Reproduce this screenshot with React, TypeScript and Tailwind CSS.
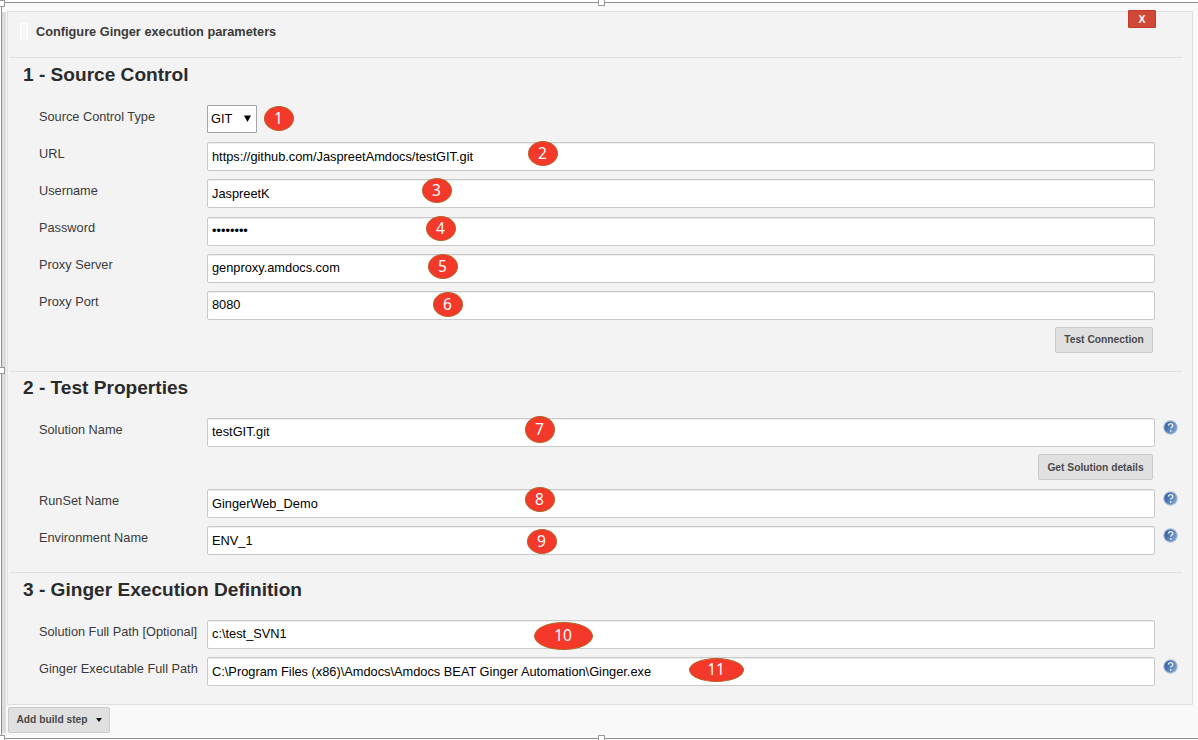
import type { ReactNode } from "react";

function HelpIcon() {
  return (
    <svg className="mt-[1.5px] ml-[8px] h-[15px] w-[15px] shrink-0" viewBox="0 0 14 14" aria-hidden="true">
      <defs>
        <linearGradient id="help" x1="0" y1="0" x2="1" y2="0.6">
          <stop offset="0.1" stopColor="#315c9c" />
          <stop offset="1" stopColor="#7ba0cc" />
        </linearGradient>
      </defs>
      <circle cx="7" cy="7" r="6.7" fill="#a3b7d4" />
      <circle cx="7" cy="7" r="5.7" fill="url(#help)" />
      <path d="M5 5.200c.1-1.200 1-1.800 2.100-1.800s2 .7 2 1.700c0 1.500-1.800 1.500-1.800 2.900" fill="none" stroke="#e9effa" strokeWidth="1.300" />
      <circle cx="7.200" cy="10.200" r="0.850" fill="#e9effa" />
    </svg>
  );
}

function Row({ label, help = false, children }: { label: string; help?: boolean; children: ReactNode }) {
  return (
    <div className="flex h-[37.2px] items-start">
      <div className="w-[168px] shrink-0 pt-[2.5px] text-[12.75px] leading-[18px] whitespace-nowrap text-[#3a3a3a]">
        {label}
      </div>
      {children}
      {help && <HelpIcon />}
    </div>
  );
}

function Field({ value }: { value: string }) {
  return (
    <div className="flex h-[29px] w-[948px] shrink-0 items-center rounded-[2px] border border-[#c9c9c9] bg-white pb-px pl-[4px] text-[12.8px] text-black shadow-[inset_0_1px_0_#eee]">
      {value}
    </div>
  );
}

function Section({ title, className, titleClass = "h-[47px] pt-[5px]", children }: { title: string; className: string; titleClass?: string; children: ReactNode }) {
  return (
    <section className={`ml-[2px] w-[1172px] shrink-0 border-t border-[#dedede] pl-[13px] ${className}`}>
      <h2 className={`text-[19.1px] leading-[24px] font-bold text-[#2b2b2b] ${titleClass}`}>{title}</h2>
      <div className="pl-[16px]">{children}</div>
    </section>
  );
}

function GrayButton({ children, className }: { children: ReactNode; className: string }) {
  return (
    <button className={`flex h-[26px] items-center justify-center rounded-[2px] border border-[#cbcbcb] bg-[#e0e0e0] text-[10.25px] font-bold text-[#4a4a4a] ${className}`}>
      {children}
    </button>
  );
}

const badges = [
  { n: 1, place: "left-[264px] top-[106px] w-[30px] h-[25px]" },
  { n: 2, place: "left-[528px] top-[141px] w-[30px] h-[25px]" },
  { n: 3, place: "left-[422px] top-[178px] w-[30px] h-[25px]" },
  { n: 4, place: "left-[426px] top-[216px] w-[30px] h-[25px]" },
  { n: 5, place: "left-[428px] top-[254px] w-[30px] h-[25px]" },
  { n: 6, place: "left-[433px] top-[292px] w-[30px] h-[25px]" },
  { n: 7, place: "left-[525px] top-[416px] w-[30px] h-[27px]" },
  { n: 8, place: "left-[525px] top-[487px] w-[30px] h-[25px]" },
  { n: 9, place: "left-[527px] top-[529px] w-[30px] h-[25px]" },
  { n: 10, place: "left-[534px] top-[622px] w-[59px] h-[28px]" },
  { n: 11, place: "left-[689px] top-[658px] w-[55px] h-[24px]" },
];

const handles = [
  "left-[-2px] top-[0px]",
  "left-[598px] top-[-1px]",
  "left-[-2px] top-[367px]",
  "left-[-2px] top-[735px]",
  "left-[598px] top-[735px]",
];

export default function App() {
  return (
    <div className="relative h-[740px] w-[1198px] overflow-hidden bg-white pt-[2px] pl-[1px] font-['Liberation_Sans',Arial,sans-serif]">
      <div className="flex h-[737px] border-t border-b border-l border-[#8f8f8f] bg-[#f9f9f9] pt-[8px]">
        <div className="mt-px h-[721px] w-[4px] shrink-0 bg-[#dcdcdc]" />
        <div className="pl-[1px]">
          <div className="relative flex h-[694px] w-[1186px] flex-col border border-[#dfdfdf] bg-[#f3f3f3]">
            <header className="flex h-[45px] shrink-0 items-center pb-[6px]">
              <svg className="ml-[12px] h-[17px] w-[9px]" viewBox="0 0 9 17" aria-hidden="true">
                <path d="M1 0v17M4 0v17M7 0v17" stroke="#fff" strokeWidth="2" strokeDasharray="1 1" />
              </svg>
              <span className="ml-[7px] text-[12.75px] font-bold text-[#3a3a3a]">Configure Ginger execution parameters</span>
            </header>
            <button className="absolute top-[-2px] right-[36px] flex h-[18px] w-[28px] items-center justify-center rounded-[1px] border border-[#c03a2b] bg-[#d14836] pt-px text-[10.5px] font-bold text-white">
              X
            </button>
            <Section title="1 - Source Control" className="h-[314px]">
              <Row label="Source Control Type">
                <div className="flex h-[28px] w-[50px] items-center justify-between rounded-[1px] border border-[#a5a5a5] bg-white pr-[5px] pb-px pl-[3px] text-[12.8px] text-black">
                  <span>GIT</span>
                  <svg className="h-[7px] w-[7px]" viewBox="0 0 7 7" aria-hidden="true"><path d="M0 .5h7L3.500 7z" /></svg>
                </div>
              </Row>
              <Row label="URL"><Field value="https://github.com/JaspreetAmdocs/testGIT.git" /></Row>
              <Row label="Username"><Field value="JaspreetK" /></Row>
              <Row label="Password"><Field value="••••••••" /></Row>
              <Row label="Proxy Server"><Field value="genproxy.amdocs.com" /></Row>
              <Row label="Proxy Port"><Field value="8080" /></Row>
              <GrayButton className="-mt-[1.2px] ml-[1016px] w-[98px]">Test Connection</GrayButton>
            </Section>
            <Section title="2 - Test Properties" className="h-[201px]" titleClass="h-[46px] pt-[4px]">
              <Row label="Solution Name" help><Field value="testGIT.git" /></Row>
              <GrayButton className="-mt-[1px] mb-[9px] ml-[999px] w-[115px]">Get Solution details</GrayButton>
              <Row label="RunSet Name" help><Field value="GingerWeb_Demo" /></Row>
              <Row label="Environment Name" help><Field value="ENV_1" /></Row>
            </Section>
            <Section title="3 - Ginger Execution Definition" className="h-[130px]">
              <Row label="Solution Full Path [Optional]"><Field value="c:\test_SVN1" /></Row>
              <Row label="Ginger Executable Full Path" help><Field value="C:\Program Files (x86)\Amdocs\Amdocs BEAT Ginger Automation\Ginger.exe" /></Row>
            </Section>
          </div>
          <GrayButton className="mt-[2px] ml-[1px] w-[102px] gap-[8px]">
            Add build step
            <svg className="h-[4px] w-[6px]" viewBox="0 0 6 4" aria-hidden="true"><path d="M0 0h6L3 4z" fill="#111" /></svg>
          </GrayButton>
        </div>
      </div>
      {badges.map((b) => (
        <div key={b.n} className={`absolute flex items-center justify-center rounded-[50%] border border-[#b5652b] bg-[#f4382a] pr-px font-['Noto_Sans',sans-serif] text-[15.5px] leading-none text-white ${b.place}`}>
          {b.n}
        </div>
      ))}
      {handles.map((place) => (
        <div key={place} className={`absolute h-[7px] w-[7px] border border-[#999] bg-white ${place}`} />
      ))}
    </div>
  );
}
